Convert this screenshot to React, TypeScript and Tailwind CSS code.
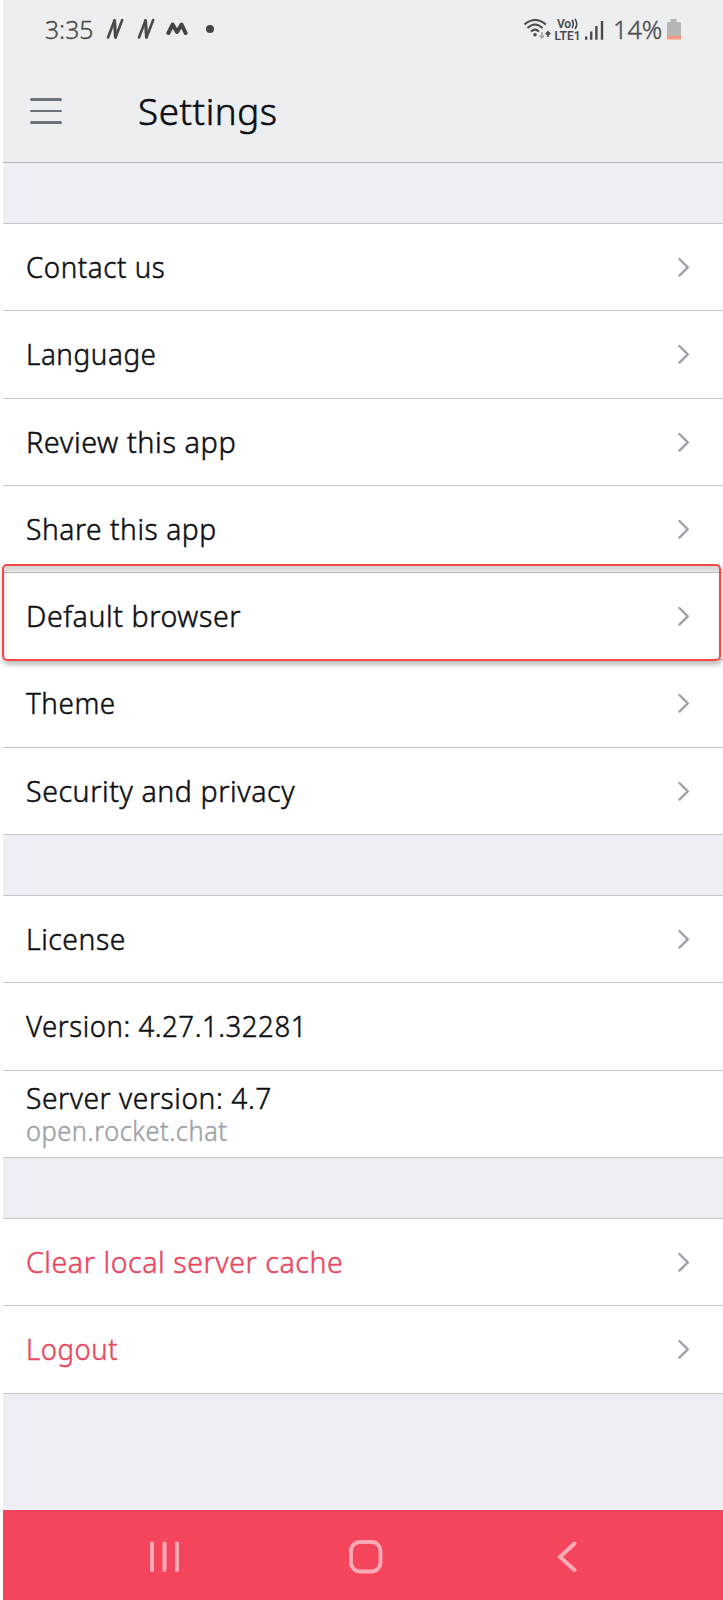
import React from "react";

type RowProps = {
  label: string;
  fit: string;
  height?: string;
  danger?: boolean;
  arrow?: boolean;
  sub?: string;
};

function Chevron() {
  return (
    <svg width="14" height="22" viewBox="0 0 14 22" fill="none" stroke="#9ea2a8" strokeWidth="2.4" className="mr-[32px] shrink-0">
      <path d="M2.4 3 L10.8 11.3 L2.4 19.6" strokeLinecap="round" strokeLinejoin="round" />
    </svg>
  );
}

function Row({ label, fit, height = "h-[87px]", danger, arrow = true, sub }: RowProps) {
  return (
    <div className={`flex items-center justify-between border-b border-[#c5c6ca] bg-white pl-[23px] ${height}`}>
      <div className="flex flex-col items-start whitespace-nowrap">
        <span className={`inline-block origin-left text-[30px] font-light tracking-[0.6px] [-webkit-text-stroke:0.5px] ${sub ? "leading-[33px]" : "leading-[40px]"} ${fit} ${danger ? "text-[#e8485f]" : "text-[#0d0e12]"}`}>
          {label}
        </span>
        {sub && <span className="inline-block origin-left scale-x-[0.938] text-[27px] font-light leading-[33px] tracking-[0.6px] text-[#9ea2a8] [-webkit-text-stroke:0.5px]">{sub}</span>}
      </div>
      {arrow && <Chevron />}
    </div>
  );
}

function NIcon() {
  return (
    <svg width="18" height="22" viewBox="0 0 18 22" fill="none" stroke="#4a4a4a" strokeLinecap="round">
      <path d="M2 19.5 L8.5 2.5" strokeWidth="2.6" />
      <path d="M8.5 2.5 L9.5 19" strokeWidth="3.2" />
      <path d="M9.5 19.5 L16.2 2" strokeWidth="2.6" />
    </svg>
  );
}

function StatusBar() {
  return (
    <div className="flex h-[58px] items-center pl-[41px] pr-[41px] text-[#4d4d4d]">
      <span className="inline-block w-[62px] whitespace-nowrap pl-px text-[26px] font-light leading-[30px] [-webkit-text-stroke:0.4px]">
        <span className="inline-block origin-left scale-x-[0.95]">3:35</span>
      </span>
      <NIcon />
      <span className="w-[13px]" />
      <NIcon />
      <svg width="22" height="14" viewBox="0 0 22 14" className="ml-[11px]" fill="none" stroke="#444" strokeWidth="4" strokeLinecap="round" strokeLinejoin="round">
        <path d="M2.4 11 L6.6 2.6 L11 10 L15.6 2.6 L19.6 11" />
      </svg>
      <span className="ml-[18px] size-2 rounded-full bg-[#444]" />
      <div className="flex-1" />
      <svg width="82" height="30" viewBox="0 -3 82 30" fill="none" stroke="#4a4a4a">
        <g strokeWidth="2.1">
          <path d="M0.5 7.5 Q11 -1.5 22 7.5" />
          <path d="M3.5 11 Q11 4 18.5 11" />
          <path d="M7 14.5 Q11 10.7 15 14.5" />
        </g>
        <circle cx="11" cy="17.7" r="1.8" fill="#4a4a4a" stroke="none" />
        <path d="M17.8 15 V21 M15.6 18.5 L17.8 21 L20 18.5" stroke="#aaa" strokeWidth="1.8" />
        <path d="M24 20 V15 M21.8 17.3 L24 14.8 L26.2 17.3" strokeWidth="1.8" />
        <g fill="#4a4a4a" stroke="none" fontFamily="Roboto" fontWeight="600">
          <text x="33" y="11" fontSize="12" textLength="14">Vo</text>
          <text x="30.5" y="22.7" fontSize="12" textLength="26" lengthAdjust="spacingAndGlyphs">LTE1</text>
        </g>
        <path d="M48 3 Q50.5 7 48 11.2 M51 2 Q54.5 7 51 12" strokeWidth="1.6" />
        <path d="M62.2 19.5 V22.7 M67.2 14.5 V22.7 M72.4 9 V22.7 M78 4 V22.7" strokeWidth="2.4" />
      </svg>
      <span className="ml-[7px] w-[53px] whitespace-nowrap text-[26px] font-light leading-[30px] [-webkit-text-stroke:0.4px]">
        <span className="inline-block origin-left scale-x-[0.97]">14%</span>
      </span>
      <svg width="16" height="22" viewBox="0 0 16 22">
        <path d="M4.5 1 H10.5 V4 H13.5 Q15 4 15 5.5 V18 H1 V5.5 Q1 4 2.5 4 H4.5 Z" fill="#b5b5b5" />
        <rect x="1" y="17.8" width="14" height="3.7" fill="#f59a7c" />
      </svg>
    </div>
  );
}

function Gap({ height }: { height: string }) {
  return <div className={`border-b border-[#c5c6ca] bg-[#efeef4] ${height}`} />;
}

export default function App() {
  return (
    <div className="h-[1600px] w-[723px] overflow-hidden bg-white pl-[3px] font-['Noto_Sans',sans-serif]">
      <div className="relative flex h-full flex-col bg-[#efeef4]">
        <header className="h-[163px] border-b border-[#b2b4b9] bg-[#edeef0]">
          <StatusBar />
          <div className="flex h-[104px] items-center pl-[27px] pt-[2px]">
            <div className="flex w-[32px] flex-col gap-[9px]">
              <span className="h-[2.5px] rounded bg-[#6c737c]" />
              <span className="h-[2.5px] rounded bg-[#6c737c]" />
              <span className="h-[2.5px] rounded bg-[#6c737c]" />
            </div>
            <h1 className="ml-[76px] origin-left scale-x-[0.992] text-[37px] font-light leading-[50px] tracking-[0.6px] text-[#0d0e12] [-webkit-text-stroke:0.6px]">Settings</h1>
          </div>
        </header>
        <Gap height="h-[61px]" />
        <Row label="Contact us" fit="scale-x-[0.924]" />
        <Row label="Language" fit="scale-x-[0.928]" height="h-[88px] pb-px" />
        <Row label="Review this app" fit="scale-x-[0.961]" />
        <Row label="Share this app" fit="scale-x-[0.938]" />
        <Row label="Default browser" fit="scale-x-[0.952]" />
        <Row label="Theme" fit="scale-x-[0.928]" height="h-[88px] pb-px" />
        <Row label="Security and privacy" fit="scale-x-[0.951]" />
        <Gap height="h-[61px]" />
        <Row label="License" fit="scale-x-[0.943]" />
        <Row label="Version: 4.27.1.32281" fit="scale-x-[0.919]" height="h-[88px] pb-px" arrow={false} />
        <Row label="Server version: 4.7" fit="scale-x-[0.938]" arrow={false} sub="open.rocket.chat" />
        <Gap height="h-[61px]" />
        <Row label="Clear local server cache" fit="scale-x-[0.95]" danger />
        <Row label="Logout" fit="scale-x-[0.917]" height="h-[88px] pb-px" danger />
        <div className="flex-1" />
        <nav className="flex h-[90px] shrink-0 items-center bg-[#f5455c] pl-[146px] pt-[3px]">
          <svg width="32" height="34" viewBox="0 0 32 34" stroke="#fbaab5" strokeWidth="4" strokeLinecap="round">
            <path d="M3 3.5 V30 M15.5 3.5 V30 M28 3.5 V30" />
          </svg>
          <svg width="34" height="34" viewBox="0 0 34 34" fill="none" stroke="#fbaab5" strokeWidth="3.8" className="ml-[168px]">
            <rect x="2" y="2" width="29.5" height="29.5" rx="9" />
          </svg>
          <svg width="22" height="34" viewBox="0 0 22 34" fill="none" stroke="#fbaab5" strokeWidth="4" strokeLinecap="round" className="ml-[173px]">
            <path d="M18.5 3.5 L4 17 L18.5 30" />
          </svg>
        </nav>
        <div className="absolute left-[-1px] top-[564px] h-[97px] w-[719px] rounded-[5px] border-2 border-[#fb4646] shadow-[1px_4px_5px_rgba(0,0,0,0.25),inset_1px_6px_3px_rgba(0,0,0,0.15)]" />
      </div>
    </div>
  );
}
